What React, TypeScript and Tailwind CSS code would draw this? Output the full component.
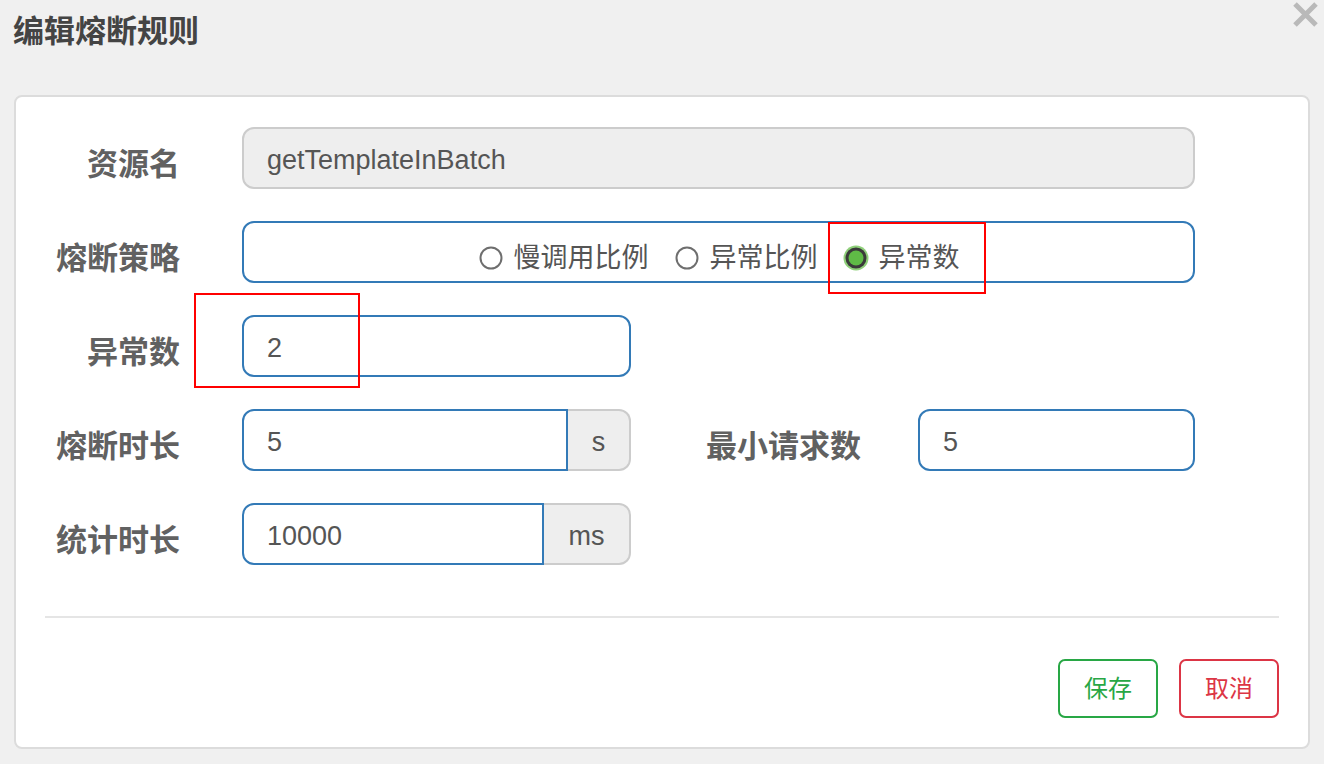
import { ReactNode } from "react";

const font = { fontFamily: '"Liberation Sans", "Noto Sans CJK SC", sans-serif' };

const Label = ({ children, w = "w-[135px]" }: { children: ReactNode; w?: string }) => (
  <div className={`${w} shrink-0 pt-[12px] text-right text-[31px] font-bold text-[#616161] leading-none`}>{children}</div>
);

const Radio = ({ checked, label }: { checked?: boolean; label: string }) => (
  <label className="flex items-center gap-[10px]">
    {checked ? (
      <svg width="26" height="26" viewBox="0 0 26 26">
        <circle cx="13" cy="13" r="12.5" fill="#8fd07a" />
        <circle cx="13" cy="13" r="10.5" fill="#3a3a3a" />
        <circle cx="13" cy="13" r="7.5" fill="#5fbb46" />
      </svg>
    ) : (
      <svg width="26" height="26" viewBox="0 0 26 26">
        <circle cx="13" cy="13" r="10.5" fill="#fff" stroke="#6e6e6e" strokeWidth="2" />
      </svg>
    )}
    <span className="text-[27px] text-[#555]">{label}</span>
  </label>
);

export default function App() {
  return (
    <div className="relative w-[1324px] h-[764px] bg-[#f0f0f0] overflow-hidden" style={font}>
      <div className="flex items-start justify-between pl-[13px] pr-[5px]">
        <h4 className="pt-[16px] text-[31px] font-bold text-[#444] leading-[32px]">编辑熔断规则</h4>
        <svg width="28" height="28" viewBox="0 0 28 28">
          <path d="M4 4 L25 25 M25 4 L4 25" stroke="#b9b9b9" strokeWidth="5" />
        </svg>
      </div>

      <div className="mt-[47px] ml-[14px] w-[1296px] h-[654px] bg-white border-2 border-[#dcdcdc] rounded-[8px] px-[29px] pt-[30px]">
        <div className="flex flex-col gap-[32px]">
          <div className="flex items-center h-[62px]">
            <Label>资源名</Label>
            <div className="ml-[62px] w-[953px] h-[62px] flex items-center bg-[#eeeeee] border-2 border-[#cccccc] rounded-[12px] pl-[23px] pt-[4px] text-[27px] text-[#555]">
              getTemplateInBatch
            </div>
          </div>

          <div className="flex items-center h-[62px]">
            <Label>熔断策略</Label>
            <div className="ml-[62px] w-[953px] h-[62px] flex items-center justify-center gap-[25px] pt-[12px] border-2 border-[#337ab7] rounded-[12px]">
              <Radio label="慢调用比例" />
              <Radio label="异常比例" />
              <Radio checked label="异常数" />
            </div>
          </div>

          <div className="flex items-center h-[62px]">
            <Label>异常数</Label>
            <div className="ml-[62px] w-[389px] h-[62px] flex items-center border-2 border-[#337ab7] rounded-[12px] pl-[23px] pt-[4px] text-[27px] text-[#555]">
              2
            </div>
          </div>

          <div className="flex items-center h-[62px]">
            <Label>熔断时长</Label>
            <div className="ml-[62px] w-[389px] h-[62px] flex">
              <div className="flex-1 flex items-center border-2 border-[#337ab7] rounded-l-[12px] pl-[23px] pt-[4px] text-[27px] text-[#555]">5</div>
              <div className="w-[63px] flex items-center justify-center pt-[4px] bg-[#eeeeee] border-2 border-l-0 border-[#cccccc] rounded-r-[12px] text-[27px] text-[#555]">s</div>
            </div>
            <Label w="w-[230px]">最小请求数</Label>
            <div className="ml-[57px] w-[277px] h-[62px] flex items-center border-2 border-[#337ab7] rounded-[12px] pl-[23px] pt-[4px] text-[27px] text-[#555]">
              5
            </div>
          </div>

          <div className="flex items-center h-[62px]">
            <Label>统计时长</Label>
            <div className="ml-[62px] w-[389px] h-[62px] flex">
              <div className="flex-1 flex items-center border-2 border-[#337ab7] rounded-l-[12px] pl-[23px] pt-[4px] text-[27px] text-[#555]">10000</div>
              <div className="w-[87px] flex items-center justify-center pt-[4px] bg-[#eeeeee] border-2 border-l-0 border-[#cccccc] rounded-r-[12px] text-[27px] text-[#555]">ms</div>
            </div>
          </div>
        </div>

        <div className="mt-[51px] h-[2px] bg-[#e5e5e5]" />

        <div className="mt-[41px] flex justify-end gap-[21px]">
          <button className="w-[100px] h-[59px] border-2 border-[#28a745] rounded-[7px] text-[24px] text-[#28a745]">保存</button>
          <button className="w-[100px] h-[59px] border-2 border-[#dc3545] rounded-[7px] text-[24px] text-[#dc3545]">取消</button>
        </div>
      </div>

      <div className="absolute left-[828px] top-[222px] w-[158px] h-[72px] border-2 border-[#ff0000]" />
      <div className="absolute left-[194px] top-[293px] w-[166px] h-[95px] border-2 border-[#ff0000]" />
    </div>
  );
}
